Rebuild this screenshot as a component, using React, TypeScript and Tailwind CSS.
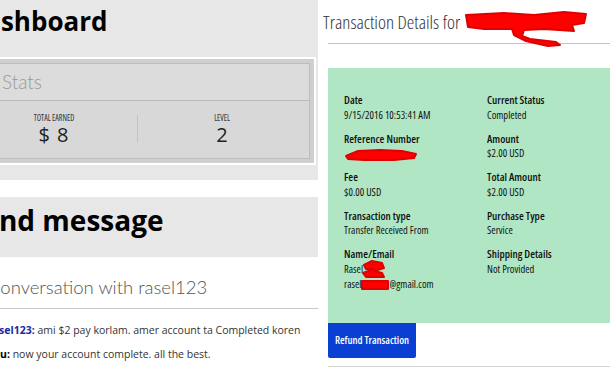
import React from "react";

const Redact = ({ w, h, d }: { w: number; h: number; d: string }) => (
  <svg width={w} height={h} viewBox={`0 0 ${w} ${h}`} className="inline-block align-middle">
    <path d={d} fill="#ff0000" stroke="#e00000" strokeWidth="2" strokeLinejoin="round" />
  </svg>
);

function Field({ label, lines }: { label: string; lines: React.ReactNode[] }) {
  return (
    <div className="leading-[15.5px]">
      <div className="font-semibold text-[11px]">{label}</div>
      {lines.map((l, i) => (
        <div key={i}>{l}</div>
      ))}
    </div>
  );
}

export default function App() {
  return (
    <div className='w-[610px] h-[380px] overflow-hidden bg-white flex font-["Open_Sans",sans-serif] text-[#222]'>
      {/* left column */}
      <div className="w-[318px] shrink-0 overflow-hidden flex flex-col">
        <div className="h-[180px] bg-[#e7e7e7] pt-[1px]">
          <h1 className="ml-[-34px] text-[26px] font-bold font-stretch-[90%] leading-[40px] text-black whitespace-nowrap">
            Dashboard
          </h1>
          <div className="mt-[16px] ml-[-40px] w-[356px] h-[108px] border-2 border-white bg-[#cfcfcf] p-[4px]">
            <div className="h-full border border-[#bdbdbd] bg-[#d8d8d8] flex flex-col">
              <div className="h-[37px] border-b border-[#b9b9b9] bg-[#dcdcdc] pl-[35px] flex items-center">
                <span className='font-["Lato",sans-serif] font-light text-[19px] text-[#999]'>Stats</span>
              </div>
              <div className="flex-1 flex items-center">
                <div className="w-[174px] flex flex-col items-center gap-[2px] -mt-[1px]">
                  <span className="text-[8px] leading-[9px] text-[#333] font-stretch-[85%]">TOTAL EARNED</span>
                  <span className="text-[20px] leading-[21px] text-[#222] tracking-[1px]">$ 8</span>
                </div>
                <div className="w-px h-[27px] bg-[#c2c2c2] -ml-[4px] -mt-[3px]" />
                <div className="w-[160px] flex flex-col items-center gap-[2px] -mt-[1px] ml-[4px]">
                  <span className="text-[8px] leading-[9px] text-[#333] font-stretch-[85%]">LEVEL</span>
                  <span className="text-[20px] leading-[21px] text-[#222]">2</span>
                </div>
              </div>
            </div>
          </div>
        </div>
        <div className="mt-[17px] h-[60px] bg-[#e7e7e7] pt-[5px]">
          <h2 className="ml-[-33px] text-[28px] font-bold leading-[36px] text-black whitespace-nowrap">
            Send message
          </h2>
        </div>
        <div className="mt-[18px] ml-[-12px] border-b border-[#c8c8c8] pb-[9px]">
          <div className='font-["Lato",sans-serif] font-light text-[18.5px] leading-[24px] text-[#555] whitespace-nowrap'>
            Conversation with rasel123
          </div>
        </div>
        <div className="mt-[14px] text-[10.5px] font-stretch-[92%] leading-[14px] text-[#333] whitespace-nowrap">
          <div className="ml-[-12px]">
            <span className="font-bold text-[#1b2aa3]">rasel123:</span> ami $2 pay korlam. amer account ta Completed koren
          </div>
          <div className="ml-[-13px] mt-[10px]">
            <span className="font-bold text-black">You:</span> now your account complete. all the best.
          </div>
        </div>
      </div>

      {/* right column */}
      <div className="flex-1 pl-[10px] flex flex-col font-stretch-condensed">
        <div className="h-[44px] border-b border-[#c4c4c4] flex items-end pb-[9px] whitespace-nowrap">
          <span className="-ml-[5px] text-[19px] leading-[24px] font-light text-[#333]">Transaction Details for </span>
          <span className="ml-[4px] -mb-[13px]">
            <Redact
              w={124}
              h={38}
              d="M2 6 L40 4 L70 6 L100 3 L122 5 L120 14 L108 16 L110 22 L80 20 L60 21 L58 27 L66 30 L92 33 L96 36 L84 37 L62 32 L50 26 L48 20 L20 20 L4 18 Z"
            />
          </span>
        </div>
        <div className="mt-[24px] h-[255px] bg-[#b0e6c4] pl-[16px] pt-[24px] text-[10.5px] text-[#111]">
          <div className="grid grid-cols-[143px_1fr] gap-y-[7.5px]">
            <Field label="Date" lines={["9/15/2016 10:53:41 AM"]} />
            <Field label="Current Status" lines={["Completed"]} />
            <Field
              label="Reference Number"
              lines={[
                <Redact key="r" w={74} h={15} d="M2 9 L14 4 L36 3 L58 4 L72 7 L70 11 L50 13 L20 13 L4 12 Z" />,
              ]}
            />
            <Field label="Amount" lines={["$2.00 USD"]} />
            <Field label="Fee" lines={["$0.00 USD"]} />
            <Field label="Total Amount" lines={["$2.00 USD"]} />
            <Field label="Transaction type" lines={["Transfer Received From"]} />
            <Field label="Purchase Type" lines={["Service"]} />
            <Field
              label="Name/Email"
              lines={[
                <span key="n" className="inline-flex items-center">
                  Rasel
                  <span className="-ml-[3px] -my-[4px]">
                    <Redact w={26} h={20} d="M4 6 L12 2 L22 4 L24 9 L14 12 L22 14 L24 18 L6 18 L3 14 L14 10 L6 10 Z" />
                  </span>
                </span>,
                <span key="e" className="inline-flex items-center">
                  rasel
                  <span className="-my-[4px]">
                    <Redact w={28} h={12} d="M1 2 L27 2 L27 10 L1 10 Z" />
                  </span>
                  @gmail.com
                </span>,
              ]}
            />
            <Field label="Shipping Details" lines={["Not Provided"]} />
          </div>
        </div>
        <div className="flex">
          <button className="w-[88px] h-[35px] bg-[#0a3fd3] text-white text-[10.5px] font-semibold rounded-b-[2px] whitespace-nowrap">
            Refund Transaction
          </button>
        </div>
        <div className="mt-[8px] border-b border-[#d4d4d4]" />
      </div>
    </div>
  );
}
